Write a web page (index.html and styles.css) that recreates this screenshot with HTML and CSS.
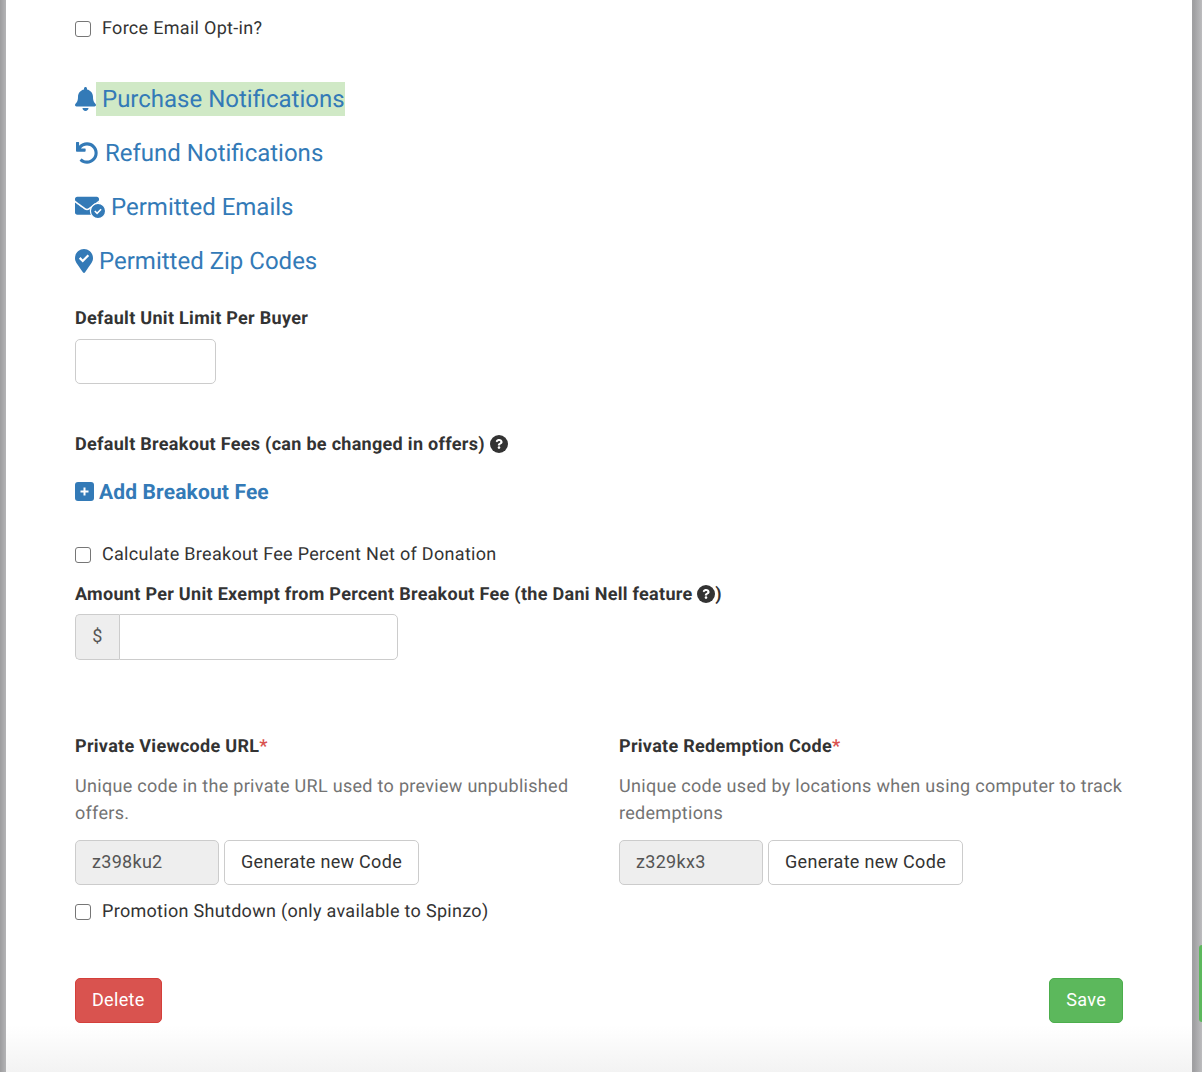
FILE: index.html
```html
<!DOCTYPE html>
<html lang="en">
<head>
    <meta charset="UTF-8">
    <title>Organization Settings</title>
    <link rel="stylesheet" href="styles.css">
</head>
<body>
    <div class="panel">
        <label class="check first"><input type="checkbox">Force Email Opt-in?</label>

        <div class="links">
            <a class="big-link">
                <svg class="ico" width="21" height="24" viewBox="0 0 448 512"><path d="M224 512c35.32 0 63.97-28.65 63.97-64H160.03c0 35.35 28.65 64 63.97 64zm215.39-149.71c-19.32-20.76-55.47-51.99-55.47-154.29 0-77.7-54.48-139.9-127.94-155.16V32c0-17.67-14.32-32-31.98-32s-31.98 14.33-31.98 32v20.84C118.56 68.1 64.08 130.3 64.08 208c0 102.3-36.15 133.53-55.47 154.29-6 6.45-8.66 14.16-8.61 21.71.11 16.4 12.98 32 32.1 32h383.8c19.12 0 32-15.6 32.1-32 .05-7.55-2.61-15.27-8.61-21.71z"/></svg><span class="hl">Purchase Notifications</span>
            </a>
            <a class="big-link">
                <svg class="ico undo" width="22" height="22" viewBox="0 0 512 512"><path d="M212.333 224.333H12c-6.627 0-12-5.373-12-12V12C0 5.373 5.373 0 12 0h48c6.627 0 12 5.373 12 12v78.112C117.773 39.279 184.26 7.47 258.175 8.007c136.906.994 246.448 111.623 246.157 248.532C504.041 393.258 393.12 504 256.333 504c-64.089 0-122.496-24.313-166.51-64.215-5.099-4.622-5.334-12.554-.467-17.42l33.967-33.967c4.474-4.474 11.662-4.717 16.401-.525C170.76 415.336 211.58 432 256.333 432c97.268 0 176-78.716 176-176 0-97.267-78.716-176-176-176-58.496 0-110.28 28.476-142.274 72.333h98.274c6.627 0 12 5.373 12 12v48c0 6.627-5.373 12-12 12z"/></svg><span class="txt">Refund Notifications</span>
            </a>
            <a class="big-link">
                <svg class="ico" width="30" height="22" viewBox="0 0 30 22"><path transform="translate(0 -2.2) scale(.0469)" d="M502.3 190.8c3.9-3.1 9.7-.2 9.7 4.7V400c0 26.5-21.5 48-48 48H48c-26.5 0-48-21.5-48-48V195.6c0-5 5.7-7.8 9.7-4.7 22.4 17.4 52.1 39.5 154.1 113.6 21.1 15.4 56.7 47.8 92.2 47.6 35.7.3 72-32.8 92.3-47.6 102-74.1 131.6-96.3 154-113.7zM256 320c23.2.4 56.6-29.2 73.4-41.4 132.7-96.3 142.8-104.7 173.4-128.7 5.8-4.5 9.2-11.5 9.2-18.9v-19c0-26.5-21.5-48-48-48H48C21.5 64 0 85.5 0 112v19c0 7.4 3.4 14.3 9.2 18.9 30.6 23.9 40.7 32.4 173.4 128.7 16.8 12.2 50.2 41.8 73.4 41.4z"/><circle cx="23" cy="15" r="7.6" stroke="#fff" stroke-width="1.2"/><path d="M19.8 15l2.3 2.3 4-4" fill="none" stroke="#fff" stroke-width="1.6"/></svg><span class="txt">Permitted Emails</span>
            </a>
            <a class="big-link">
                <svg class="ico" width="18" height="24" viewBox="0 0 384 512"><path d="M172.268 501.67C26.97 291.031 0 269.413 0 192 0 85.961 85.961 0 192 0s192 85.961 192 192c0 77.413-26.97 99.031-172.268 309.67-9.535 13.774-29.93 13.773-39.464 0z"/><path d="M100 190l65 65 120-120" fill="none" stroke="#fff" stroke-width="48"/></svg><span class="txt">Permitted Zip Codes</span>
            </a>
        </div>

        <div class="field unit-limit">
            <label class="lbl">Default Unit Limit Per Buyer</label>
            <input type="text" class="control short">
        </div>

        <div class="fees">
            <label class="lbl">Default Breakout Fees (can be changed in offers) <svg class="help" width="18" height="18" viewBox="0 0 18 18"><circle cx="9" cy="9" r="9"/><path transform="translate(1.58 1.46) scale(.029)" fill="#fff" d="M262.655 90c-54.497 0-89.255 22.957-116.549 63.758-3.536 5.286-2.353 12.415 2.715 16.258l34.699 26.31c5.205 3.947 12.621 3.008 16.665-2.122 17.864-22.658 30.113-35.797 57.303-35.797 20.429 0 45.698 13.148 45.698 32.958 0 14.976-12.363 22.667-32.534 33.976C247.128 238.528 216 254.941 216 296v4c0 6.627 5.373 12 12 12h56c6.627 0 12-5.373 12-12v-1.333c0-28.462 83.186-29.647 83.186-106.667 0-58.002-60.165-102-116.531-102zM256 338c-25.365 0-46 20.635-46 46 0 25.364 20.635 46 46 46s46-20.636 46-46c0-25.365-20.635-46-46-46z"/></svg></label>
            <a class="add-link"><svg class="ico plus" width="19" height="19" viewBox="0 0 19 19"><rect width="19" height="19" rx="3"/><path d="M9.5 5.5v8M5.5 9.5h8" stroke="#fff" stroke-width="2" fill="none"/></svg>Add Breakout Fee</a>
        </div>

        <label class="check net"><input type="checkbox">Calculate Breakout Fee Percent Net of Donation</label>

        <div class="field exempt">
            <label class="lbl">Amount Per Unit Exempt from Percent Breakout Fee (the Dani Nell feature <svg class="help" width="18" height="18" viewBox="0 0 18 18"><circle cx="9" cy="9" r="9"/><path transform="translate(1.58 1.46) scale(.029)" fill="#fff" d="M262.655 90c-54.497 0-89.255 22.957-116.549 63.758-3.536 5.286-2.353 12.415 2.715 16.258l34.699 26.31c5.205 3.947 12.621 3.008 16.665-2.122 17.864-22.658 30.113-35.797 57.303-35.797 20.429 0 45.698 13.148 45.698 32.958 0 14.976-12.363 22.667-32.534 33.976C247.128 238.528 216 254.941 216 296v4c0 6.627 5.373 12 12 12h56c6.627 0 12-5.373 12-12v-1.333c0-28.462 83.186-29.647 83.186-106.667 0-58.002-60.165-102-116.531-102zM256 338c-25.365 0-46 20.635-46 46 0 25.364 20.635 46 46 46s46-20.636 46-46c0-25.365-20.635-46-46-46z"/></svg>)</label>
            <div class="input-group">
                <span class="addon">$</span>
                <input type="text" class="control grouped">
            </div>
        </div>

        <div class="codes">
            <div class="code-col">
                <label class="lbl">Private Viewcode URL<span class="req">*</span></label>
                <p class="hint">Unique code in the private URL used to preview unpublished offers.</p>
                <div class="code-row">
                    <input type="text" class="control code" value="z398ku2" readonly>
                    <button class="btn">Generate new Code</button>
                </div>
            </div>
            <div class="code-col">
                <label class="lbl">Private Redemption Code<span class="req">*</span></label>
                <p class="hint">Unique code used by locations when using computer to track redemptions</p>
                <div class="code-row">
                    <input type="text" class="control code" value="z329kx3" readonly>
                    <button class="btn">Generate new Code</button>
                </div>
            </div>
        </div>

        <label class="check shutdown"><input type="checkbox">Promotion Shutdown (only available to Spinzo)</label>

        <div class="actions">
            <button class="btn danger">Delete</button>
            <button class="btn success">Save</button>
        </div>
    </div>
    <div class="side-tab"></div>
</body>
</html>
```

FILE: styles.css
```css
*{
    box-sizing: border-box;
}
html,body{
    margin: 0;
    height: 1072px;
    overflow: hidden;
}
body{
    position: relative;
    padding: 0 10px 0 6px;
    background: linear-gradient(to right, #9c9c9e 0, #b4b4b6 6px, #a8a8aa 6px, #a0a0a2 1192px, #a0a0a2 1194px, #bcbcbe 1202px);
    font-family: Roboto, "Liberation Sans", sans-serif;
    font-size: 18px;
    letter-spacing: .3px;
    color: #333;
    text-rendering: geometricPrecision;
}
.panel{
    height: 1072px;
    padding: 16px 69px 0;
    background: linear-gradient(to bottom, #fff 1025px, #f3f3f3 1072px);
}
.check{
    display: flex;
    align-items: center;
    height: 26px;
    line-height: 26px;
}
.check input{
    appearance: none;
    width: 16px;
    height: 16px;
    margin: 0 11px 0 0;
    background: #fff;
    border: 1px solid #767676;
    border-radius: 3px;
}
.links{
    margin-top: 40px;
}
.big-link{
    display: flex;
    align-items: center;
    height: 34px;
    margin-bottom: 20px;
    font-size: 24px;
    letter-spacing: 0;
    color: #337ab7;
}
.ico{
    fill: #337ab7;
    flex: none;
}
.undo{
    margin: 0 1px;
}
.plus{
    margin-bottom: 4px;
}
.hl{
    line-height: 34px;
    padding: 0 0 0 6px;
    background: #d0e9c6;
}
.txt{
    margin-left: 6px;
}
.lbl{
    display: block;
    font-weight: 700;
    line-height: 26px;
}
.field.unit-limit{
    margin-top: 28px;
}
.control{
    display: block;
    height: 45px;
    padding: 0 16px 2px;
    border: 1px solid #ccc;
    border-radius: 5px;
    font: inherit;
    letter-spacing: inherit;
    color: #555;
    background: #fff;
}
.short{
    width: 141px;
    margin-top: 7px;
}
.fees{
    margin-top: 48px;
}
.help{
    fill: #333;
    vertical-align: -3px;
}
.add-link{
    display: flex;
    align-items: center;
    gap: 5px;
    margin-top: 22px;
    height: 26px;
    font-size: 21px;
    font-weight: 700;
    letter-spacing: .14px;
    color: #337ab7;
}
.check.net{
    margin-top: 36px;
}
.exempt{
    margin-top: 14px;
}
.input-group{
    display: flex;
    width: 323px;
    margin-top: 6px;
}
.addon{
    width: 44px;
    height: 46px;
    line-height: 44px;
    text-align: center;
    color: #555;
    background: #eee;
    border: 1px solid #ccc;
    border-right: 0;
    border-radius: 5px 0 0 5px;
}
.grouped{
    flex: 1;
    min-width: 0;
    height: 46px;
    border-radius: 0 5px 5px 0;
}
.codes{
    display: grid;
    grid-template-columns: 504px 504px;
    gap: 40px;
    margin-top: 74px;
}
.req{
    color: #d9534f;
}
.hint{
    margin: 13px 0 0;
    line-height: 27px;
    color: #737373;
}
.code-row{
    display: flex;
    gap: 5px;
    margin-top: 13px;
}
.code{
    width: 144px;
    background: #eee;
}
.btn{
    height: 45px;
    padding: 0 16px 2px;
    border: 1px solid #ccc;
    border-radius: 5px;
    font: inherit;
    letter-spacing: inherit;
    color: #333;
    background: #fff;
}
.check.shutdown{
    margin-top: 14px;
}
.actions{
    display: flex;
    justify-content: space-between;
    margin-top: 53px;
}
.danger{
    color: #fff;
    background: #d9534f;
    border-color: #d43f3a;
}
.success{
    color: #fff;
    background: #5cb85c;
    border-color: #4cae4c;
}
.side-tab{
    position: absolute;
    right: 0;
    top: 945px;
    width: 3px;
    height: 77px;
    background: #5cb85c;
    border-radius: 4px 0 0 4px;
}
```
